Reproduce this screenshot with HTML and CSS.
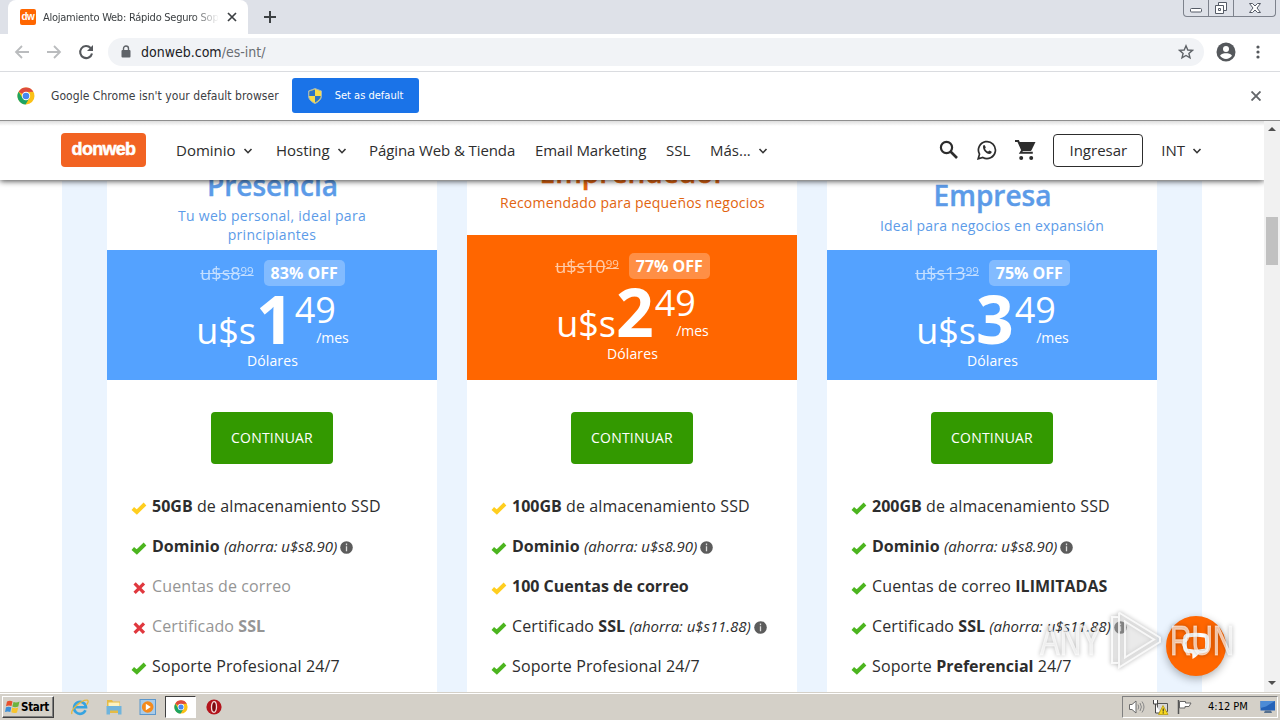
FILE: index.html
```html
<!DOCTYPE html>
<html lang="es">
<head>
  <meta charset="UTF-8" />
  <meta name="viewport" content="width=device-width, initial-scale=1.0" />
  <title>Alojamiento Web: Rápido Seguro Soporte</title>
  <link rel="stylesheet" href="styles.css">
</head>
<body>
  <!-- shared icons -->
  <svg class="defs" width="0" height="0">
    <symbol id="check" viewBox="0 0 16 14"><path d="M1.8 7.600 5.8 11 14 3" fill="none" stroke="currentColor" stroke-width="3.9"/></symbol>
    <symbol id="cross" viewBox="0 0 16 14"><path d="M3.600 2.400 13 11.800M13 2.400 3.600 11.800" fill="none" stroke="currentColor" stroke-width="3.2"/></symbol>
    <symbol id="info" viewBox="0 0 13 13"><circle cx="6.5" cy="6.5" r="6.3" fill="#5c5c5c"/><path d="M6.5 2.6v1.6M6.5 5.3v5" stroke="#ddd" stroke-width="1.3"/></symbol>
    <symbol id="chevron" viewBox="0 0 10 10"><path d="M1.5 3 5 6.7 8.5 3" fill="none" stroke="#333" stroke-width="1.6"/></symbol>
    <symbol id="chrome" viewBox="0 0 18 18">
      <circle cx="9" cy="9" r="8.5" fill="#fbc116"/>
      <path d="M9 9 1.6 4.7A8.5 8.5 0 0 1 16.4 4.8L9 5z" fill="#dd4b3e"/>
      <path d="M1.6 4.7A8.5 8.5 0 0 0 8.6 17.5L12.4 11 9 9 5.6 11z" fill="#1da462"/>
      <circle cx="9" cy="9" r="4.2" fill="#fff"/><circle cx="9" cy="9" r="3.3" fill="#4688f1"/>
    </symbol>
  </svg>

  <div class="tabstrip">
    <div class="tab">
      <span class="favicon">dw</span>
      <span class="tab-title">Alojamiento Web: Rápido Seguro Sop</span>
      <svg width="10" height="10" viewBox="0 0 10 10"><path d="M1 1l8 8M9 1 1 9" stroke="#3c4043" stroke-width="1.7"/></svg>
    </div>
    <svg class="new-tab" width="12" height="12" viewBox="0 0 12 12"><path d="M6 0v12M0 6h12" stroke="#3c4043" stroke-width="2"/></svg>
    <div class="win-buttons">
      <span><svg width="14" height="16" viewBox="0 0 14 16"><rect x="1.5" y="8.5" width="11" height="3.5" rx="1" fill="#fff" stroke="#555b66"/></svg></span>
      <span><svg width="14" height="16" viewBox="0 0 14 16"><path d="M4.500 2.500h8v8h-8z" fill="#fff" stroke="#555b66"/><path d="M1.500 5.500h8v8h-8z" fill="#fff" stroke="#555b66"/><path d="M4.500 8.500h2v2h-2z" fill="none" stroke="#555b66"/></svg></span>
      <span class="wide"><svg width="14" height="16" viewBox="0 0 14 16"><path d="M1.500 3.500h3L7 6l2.500-2.500h3L9 8l3.500 4.500h-3L7 10l-2.500 2.500h-3L5 8z" fill="#fff" stroke="#555b66"/></svg></span>
    </div>
  </div>

  <div class="toolbar">
    <svg width="16" height="16" viewBox="0 0 16 16"><path d="M15 8H2M8 2 2 8l6 6" fill="none" stroke="#babcbe" stroke-width="1.8"/></svg>
    <svg width="16" height="16" viewBox="0 0 16 16"><path d="M1 8h13M8 2l6 6-6 6" fill="none" stroke="#babcbe" stroke-width="1.8"/></svg>
    <svg width="16" height="16" viewBox="0 0 16 16"><path d="M12.600 4A6 6 0 1 0 14 9.500" fill="none" stroke="#55585c" stroke-width="2.1"/><path d="M15 1v6H9z" fill="#55585c"/></svg>
    <div class="omnibox">
      <svg width="10" height="13" viewBox="0 0 10 13"><rect x="0.500" y="5" width="9" height="7.500" rx="1" fill="#5f6368"/><path d="M2.500 5.500V3.500a2.500 2.500 0 0 1 5 0v2" fill="none" stroke="#5f6368" stroke-width="1.400"/></svg>
      <span class="url">donweb.com<i>/es-int/</i></span>
      <svg class="star" width="16" height="16" viewBox="0 0 16 16"><path d="M8 1.800l1.800 4.200 4.600.4-3.500 3 1.100 4.500L8 11.500l-4 2.400 1.100-4.500-3.500-3L6.200 6z" fill="none" stroke="#5f6368" stroke-width="1.400"/></svg>
    </div>
    <svg class="avatar" width="20" height="20" viewBox="0 0 20 20"><circle cx="10" cy="10" r="9.500" fill="#55585c"/><circle cx="10" cy="7" r="3" fill="#fff"/><path d="M4 13.800c1-2 4-2.600 6-2.600s5 .6 6 2.600a7.300 7.300 0 0 1-12 0z" fill="#fff"/></svg>
    <svg class="kebab" width="4" height="14" viewBox="0 0 4 14"><g fill="#55585c"><circle cx="2" cy="2" r="1.600"/><circle cx="2" cy="7" r="1.600"/><circle cx="2" cy="12" r="1.600"/></g></svg>
  </div>

  <div class="infobar">
    <svg width="18" height="18"><use href="#chrome"/></svg>
    <span class="infobar-text">Google Chrome isn't your default browser</span>
    <button class="set-default">
      <svg width="14" height="16" viewBox="0 0 14 16"><path d="M7 .5 13.500 3v4.500c0 4-3 6.500-6.500 8-3.500-1.500-6.500-4-6.500-8V3z" fill="#f7dc4c" stroke="#9fb5c0"/><path d="M7 1.500v6.500H1.200V3.500zM7 8h5.800c-.3 3-2.800 5-5.800 6.500z" fill="#2c74c8"/></svg>
      Set as default
    </button>
    <svg class="infobar-close" width="10" height="10" viewBox="0 0 10 10"><path d="M.5.5l9 9M9.500.5l-9 9" stroke="#63666a" stroke-width="1.900"/></svg>
  </div>

  <div class="viewport">
    <div class="page">
      <header class="navbar">
        <a class="logo">donweb</a>
        <nav>
          <a class="n1">Dominio <svg width="10" height="10"><use href="#chevron"/></svg></a>
          <a class="n2">Hosting <svg width="10" height="10"><use href="#chevron"/></svg></a>
          <a class="n3">Página Web &amp; Tienda</a>
          <a class="n4">Email Marketing</a>
          <a class="n5">SSL</a>
          <a class="n6">Más... <svg width="10" height="10"><use href="#chevron"/></svg></a>
        </nav>
        <div class="actions">
          <svg width="20" height="20" viewBox="0 0 20 20"><circle cx="7.500" cy="7.500" r="5.600" fill="none" stroke="#2d2d2d" stroke-width="2.200"/><path d="M11.500 11.500l6.500 6.500" stroke="#2d2d2d" stroke-width="2.700"/></svg>
          <svg width="20" height="20" viewBox="0 0 20 20"><path d="M1.200 18.800l1.300-4.600a8.500 8.500 0 1 1 3.300 3.300z" fill="none" stroke="#2d2d2d" stroke-width="1.700"/><path d="M6.200 5.600c.7-.8 1.500-.6 1.800.1l.7 1.500c.2.500-.7 1.200-.6 1.500.6 1.400 1.700 2.300 3 2.900.4.200 1-1.100 1.400-1l1.900.9c.6.400.1 1.600-.5 2.100-3.200 2.100-9-3.300-7.700-8z" fill="#2d2d2d"/></svg>
          <svg width="21" height="20" viewBox="0 0 21 20"><path d="M0 1h3.200l4 9.200-1.600 2.600h12.200" fill="none" stroke="#2d2d2d" stroke-width="2"/><path d="M3.800 2h16.700l-4 8.300-.8.700H7.300z" fill="#2d2d2d"/><circle cx="6.200" cy="18" r="2" fill="#2d2d2d"/><circle cx="16.200" cy="18" r="2" fill="#2d2d2d"/></svg>
          <button class="login">Ingresar</button>
          <a class="country">INT <svg width="10" height="10"><use href="#chevron"/></svg></a>
        </div>
      </header>

      <main class="plans">
        <section class="plan">
          <div class="plan-head">
            <h2>Presencia</h2>
            <p>Tu web personal, ideal para<br>principiantes</p>
          </div>
          <div class="plan-price">
            <div class="before"><s>u$s8<sup>99</sup></s><b>83% OFF</b></div>
            <div class="price"><span>u$s</span><strong>1</strong><div class="cents">49<small>/mes</small></div></div>
            <div class="currency">Dólares</div>
          </div>
          <a class="btn">CONTINUAR</a>
          <ul>
            <li><svg class="yellow"><use href="#check"/></svg><b>50GB</b> de almacenamiento SSD</li>
            <li><svg class="green"><use href="#check"/></svg><b>Dominio</b> <em>(ahorra: u$s8.90)</em> <svg class="info"><use href="#info"/></svg></li>
            <li class="off"><svg class="red"><use href="#cross"/></svg>Cuentas de correo</li>
            <li class="off"><svg class="red"><use href="#cross"/></svg>Certificado <b>SSL</b></li>
            <li><svg class="green"><use href="#check"/></svg>Soporte Profesional 24/7</li>
          </ul>
        </section>

        <section class="plan featured">
          <div class="plan-head">
            <h2>Emprendedor</h2>
            <p>Recomendado para pequeños negocios</p>
          </div>
          <div class="plan-price">
            <div class="before"><s>u$s10<sup>99</sup></s><b>77% OFF</b></div>
            <div class="price"><span>u$s</span><strong>2</strong><div class="cents">49<small>/mes</small></div></div>
            <div class="currency">Dólares</div>
          </div>
          <a class="btn">CONTINUAR</a>
          <ul>
            <li><svg class="yellow"><use href="#check"/></svg><b>100GB</b> de almacenamiento SSD</li>
            <li><svg class="green"><use href="#check"/></svg><b>Dominio</b> <em>(ahorra: u$s8.90)</em> <svg class="info"><use href="#info"/></svg></li>
            <li><svg class="yellow"><use href="#check"/></svg><b>100 Cuentas de correo</b></li>
            <li><svg class="green"><use href="#check"/></svg>Certificado <b>SSL</b> <em>(ahorra: u$s11.88)</em> <svg class="info"><use href="#info"/></svg></li>
            <li><svg class="green"><use href="#check"/></svg>Soporte Profesional 24/7</li>
          </ul>
        </section>

        <section class="plan single">
          <div class="plan-head">
            <h2>Empresa</h2>
            <p>Ideal para negocios en expansión</p>
          </div>
          <div class="plan-price">
            <div class="before"><s>u$s13<sup>99</sup></s><b>75% OFF</b></div>
            <div class="price"><span>u$s</span><strong>3</strong><div class="cents">49<small>/mes</small></div></div>
            <div class="currency">Dólares</div>
          </div>
          <a class="btn">CONTINUAR</a>
          <ul>
            <li><svg class="green"><use href="#check"/></svg><b>200GB</b> de almacenamiento SSD</li>
            <li><svg class="green"><use href="#check"/></svg><b>Dominio</b> <em>(ahorra: u$s8.90)</em> <svg class="info"><use href="#info"/></svg></li>
            <li><svg class="green"><use href="#check"/></svg>Cuentas de correo <b>ILIMITADAS</b></li>
            <li><svg class="green"><use href="#check"/></svg>Certificado <b>SSL</b> <em>(ahorra: u$s11.88)</em> <svg class="info"><use href="#info"/></svg></li>
            <li><svg class="green"><use href="#check"/></svg>Soporte <b>Preferencial</b> 24/7</li>
          </ul>
        </section>
      </main>
    </div>

    <div class="scrollbar">
      <svg width="8" height="4" viewBox="0 0 8 4"><path d="M0 4 4 0l4 4z" fill="#505050"/></svg>
      <div class="thumb"></div>
      <svg class="down" width="8" height="4" viewBox="0 0 8 4"><path d="M0 0h8L4 4z" fill="#505050"/></svg>
    </div>

    <div class="chat">
      <svg width="28" height="28" viewBox="0 0 28 28"><path d="M5.500 3.500Q14 2 22.500 3.500q2 .4 2.300 2.500.7 5 0 10.500-.3 2-2.300 2.300Q14 20.500 5.500 18.800q-2-.3-2.300-2.300-.7-5.500 0-10.500.3-2.100 2.300-2.500z" fill="none" stroke="#fff" stroke-width="4"/><path d="M10 19l8.500-.5q-1.500 5-8 8.500z" fill="#fff"/></svg>
    </div>

    <div class="watermark">
      <span>ANY</span>
      <svg width="56" height="64" viewBox="0 0 56 64"><path d="M10 4.500 51 29.500 51 34 10 59.500V49M10 20V4.500M16 13.500l29 18-29 18zM3 9v46h7V9z" fill="rgba(255,255,255,.3)" stroke="rgba(255,255,255,.8)" stroke-width="2"/></svg>
      <span>RUN</span>
    </div>
  </div>

  <footer class="taskbar">
    <button class="start">
      <svg width="16" height="16" viewBox="0 0 16 16"><path d="M2 2.500q3-1.500 5.500 0L6.500 7q-3-1-5.500.2z" fill="#e8502c"/><path d="M8.500 3q3 1 6-.5l-1.200 5Q10 9 7.300 7.500z" fill="#6db33f"/><path d="M1 8.300q2.500-1.200 5.300-.1l-1 4.800Q2.800 12 0 13z" fill="#3c8fd8"/><path d="M7.200 8.600q3 1.200 6 0l-1.200 4.800q-3 1.200-5.700-.1z" fill="#f8c42c"/></svg>
      Start
    </button>
    <div class="apps">
      <span><svg width="18" height="18" viewBox="0 0 18 18"><path d="M14.500 12.300A6 6 0 1 1 15 9.200H4" fill="none" stroke="#36a3e0" stroke-width="2.600"/><path d="M1 16C-1 12 10 2 16 2.200c2 .3 1 3-.5 4.500" fill="none" stroke="#e8b83a" stroke-width="1.300"/></svg></span>
      <span><svg width="18" height="18" viewBox="0 0 18 18"><path d="M2 2h5l1 1.500h7V15H2z" fill="#e5bb45"/><path d="M3.500 4.500h11v5h-11z" fill="#fbf2c0"/><path d="M1.500 8h15v8.500h-3.500v-4H5v4H1.500z" fill="#6fb4dc"/></svg></span>
      <span><svg width="18" height="18" viewBox="0 0 18 18"><rect x="1" y="1.500" width="15.500" height="15" fill="#a9cbe8" stroke="#5b97cc"/><circle cx="8.700" cy="9" r="5.800" fill="#f48a1c"/><path d="M6.800 5.800v6.500l5-3.200z" fill="#fff"/></svg></span>
      <span class="active"><svg width="14" height="14"><use href="#chrome"/></svg></span>
      <span><svg width="16" height="16" viewBox="0 0 16 16"><circle cx="8" cy="8" r="7.600" fill="#b3141c"/><ellipse cx="8" cy="8" rx="2.500" ry="5.300" fill="#7d090f" stroke="#f3dcdc" stroke-width="1.300"/></svg></span>
    </div>
    <div class="tray">
      <svg width="17" height="16" viewBox="0 0 17 16"><path d="M1.500 5.500h2.500L8 2v12L4 10.500H1.500z" fill="#fff" stroke="#6b6b6b"/><path d="M10 5.500q1.500 2.500 0 5M12 4q2.800 4 0 8M14 2.500q4 5.500 0 11" fill="none" stroke="#888"/></svg>
      <svg width="17" height="16" viewBox="0 0 17 16"><path d="M5.500 4.500h10v8h-10z" fill="#d8d8d8" stroke="#555"/><path d="M1.500 1v4h4V1M3.500 5v9h5" fill="#fff" stroke="#444"/><path d="M11 6.500l5 9H6.500z" fill="#f8d820" stroke="#b39500" stroke-width=".7"/><path d="M11.200 9.500v3M11.200 13.300v1.200" stroke="#222"/></svg>
      <svg width="17" height="16" viewBox="0 0 17 16"><path d="M2.500 1v14" stroke="#555" stroke-width="1.500"/><path d="M3.500 2.500h6v1.500h5.500l-2 3.500h-4v1.500H3.500z" fill="#fff" stroke="#666"/></svg>
      <span class="clock">4:12 PM</span>
      <svg width="16" height="14" viewBox="0 0 16 14"><path d="M.5 1h14.500v9.500H.5z" fill="#2462b8"/><path d="M.5 1h14.500L6 6.500.5 8z" fill="#4c8bd6"/><path d="M5 10.500h6l1 2.500H4z" fill="#56708e"/></svg>
    </div>
  </footer>
</body>
</html>
```
FILE: styles.css
```css
* {
  margin: 0;
  padding: 0;
  box-sizing: border-box;
}
body {
  width: 1280px;
  height: 720px;
  display: flex;
  flex-direction: column;
  overflow: hidden;
  background: #fff;
  font-family: "Open Sans", sans-serif;
  color: #2d2d2d;
}
svg {
  flex: none;
}
.defs {
  position: absolute;
}
button {
  border: none;
  font-family: inherit;
}

/* browser window */
.tabstrip,
.toolbar,
.infobar {
  font-family: "DejaVu Sans Condensed", "DejaVu Sans", sans-serif;
  font-stretch: condensed;
}
.tabstrip {
  flex: none;
  height: 34px;
  display: flex;
  align-items: center;
  background: #dee1e8;
}
.tab {
  width: 240px;
  height: 34px;
  margin-left: 8px;
  padding: 0 11px 0 12px;
  display: flex;
  align-items: center;
  background: #fff;
  border-radius: 8px 8px 0 0;
}
.favicon {
  width: 16px;
  height: 16px;
  border-radius: 2px;
  background: #f60;
  color: #fff;
  font: bold 10px/15px "Liberation Sans", sans-serif;
  letter-spacing: -0.5px;
  text-align: center;
}
.tab-title {
  width: 176px;
  margin: 0 9px 0 7px;
  overflow: hidden;
  white-space: nowrap;
  font-size: 11px;
  letter-spacing: -0.25px;
  color: #3c4043;
  -webkit-mask-image: linear-gradient(90deg, #000 150px, transparent 176px);
  mask-image: linear-gradient(90deg, #000 150px, transparent 176px);
}
.new-tab {
  margin-left: 16px;
}
.win-buttons {
  height: 17px;
  margin: 0 4px auto auto;
  display: flex;
  border: 1px solid #7d828c;
  border-top: none;
  border-radius: 0 0 4px 4px;
}
.win-buttons span {
  width: 25px;
  display: flex;
  justify-content: center;
  border-right: 1px solid #7d828c;
}
.win-buttons .wide {
  width: 41px;
  border-right: none;
}
.toolbar {
  flex: none;
  height: 38px;
  padding: 0 19px 2px 14px;
  display: flex;
  align-items: center;
  gap: 16px;
  border-bottom: 1px solid #dadce0;
}
.omnibox {
  width: 1096px;
  height: 28px;
  margin-left: -2px;
  padding: 0 10px 0 13px;
  display: flex;
  align-items: center;
  border-radius: 14px;
  background: #f1f3f6;
}
.url {
  margin-left: 10px;
  font-size: 14px;
  color: #202124;
}
.url i {
  font-style: normal;
  color: #696d72;
}
.star {
  margin-left: auto;
}
.avatar {
  margin-left: -4px;
}
.kebab {
  margin-left: 4px;
}
.infobar {
  flex: none;
  height: 48px;
  padding: 0 19px 1px 17px;
  display: flex;
  align-items: center;
}
.infobar-text {
  width: 229px;
  margin: 0 12px 0 16px;
  font-size: 12px;
  letter-spacing: 0.05px;
  white-space: nowrap;
  color: #3c4043;
}
.set-default {
  width: 127px;
  height: 35px;
  display: flex;
  align-items: center;
  justify-content: center;
  gap: 13px;
  border-radius: 3px;
  background: #1a73e8;
  color: #fff;
  font-size: 11px;
}
.infobar-close {
  margin-left: auto;
}

/* web page */
.viewport {
  position: relative;
  flex: 1;
  min-height: 0;
  display: flex;
  border-top: 1px solid #8f8f8f;
}
.page {
  width: 1264px;
  display: flex;
  flex-direction: column;
  overflow: hidden;
}
.navbar {
  position: relative;
  flex: none;
  height: 59px;
  margin-bottom: 1px;
  padding: 0 62px 1px 61px;
  display: flex;
  align-items: center;
  background: linear-gradient(#ddd, #fff 5px);
  box-shadow: 0 1px 6px rgba(0, 0, 0, 0.75);
  font-size: 15px;
}
.logo {
  width: 85px;
  height: 34px;
  margin-right: 30px;
  border-radius: 4px;
  background: #f26322;
  color: #fff;
  font: bold 18px/33px "Liberation Sans", sans-serif;
  letter-spacing: -0.7px;
  text-align: center;
  -webkit-text-stroke: 0.5px #fff;
}
nav,
.actions {
  display: flex;
  align-items: center;
}
nav a {
  white-space: nowrap;
}
nav svg,
.country svg {
  margin-left: 3px;
}
.n1 { width: 100px; }
.n2 { width: 93px; }
.n3 { width: 166px; letter-spacing: -0.1px; }
.n4 { width: 131px; letter-spacing: -0.1px; }
.n5 { width: 44px; }
.actions {
  margin-left: auto;
  gap: 18px;
}
.login {
  width: 90px;
  height: 33px;
  margin-left: -1px;
  padding-bottom: 1px;
  border: 1px solid #2d2d2d;
  border-radius: 4px;
  background: #fff;
  color: #2d2d2d;
  font-size: 15px;
}
.plans {
  flex: 1;
  width: 1140px;
  margin-left: 62px;
  padding: 0 45px;
  display: flex;
  gap: 30px;
  background: #ebf4fe;
}
.plan {
  width: 330px;
  background: #fff;
}
.plan-head {
  height: 69px;
  padding-bottom: 6px;
  display: flex;
  flex-direction: column;
  justify-content: flex-end;
  text-align: center;
  color: #5c9be8;
}
.plan-head h2 {
  margin-bottom: 2px;
  padding-left: 1px;
  font-size: 28px;
  line-height: 38px;
  font-weight: 600;
  -webkit-text-stroke: 0.4px;
}
.plan-head p {
  font-size: 14px;
  line-height: 19px;
  letter-spacing: 0.3px;
}
.plan-price {
  height: 130px;
  padding-top: 10px;
  background: #54a2ff;
  color: #fff;
  text-align: center;
}
.before {
  height: 26px;
  display: flex;
  align-items: center;
  justify-content: center;
  gap: 10px;
  padding-left: 1px;
}
.before s {
  font-size: 18px;
  line-height: 26px;
  opacity: 0.65;
}
.before sup {
  font-size: 11.5px;
  line-height: 0;
  vertical-align: 5px;
}
.before b {
  width: 81px;
  border-radius: 5px;
  background: rgba(255, 255, 255, 0.27);
  font-size: 16px;
  line-height: 26px;
}
.price {
  height: 65px;
  padding-left: 1px;
  display: flex;
  justify-content: center;
  font-size: 36px;
  line-height: 36px;
}
.price span {
  margin-top: 27px;
}
.price strong {
  margin-top: -1px;
  font-size: 66px;
  line-height: 66px;
}
.cents {
  width: 55px;
  margin-top: 6px;
  padding-left: 1px;
  text-align: left;
}
.cents small {
  display: block;
  font-size: 14px;
  line-height: 20px;
  text-align: right;
}
.currency {
  padding-left: 1px;
  font-size: 14px;
  line-height: 20px;
  letter-spacing: 0.1px;
}
.btn {
  width: 122px;
  height: 52px;
  margin: 32px auto 22px;
  display: block;
  border-radius: 4px;
  background: #339900;
  color: #fff;
  font-size: 14px;
  line-height: 52px;
  letter-spacing: 0.2px;
  text-align: center;
}
.plan ul {
  padding-left: 24px;
  list-style: none;
}
.plan li {
  height: 40px;
  font-size: 16px;
  line-height: 40px;
  letter-spacing: 0.12px;
  white-space: nowrap;
}
.plan li svg {
  width: 16px;
  height: 14px;
  margin-right: 5px;
  vertical-align: -3px;
}
.plan li .info {
  width: 13px;
  height: 13px;
  margin: 0 0 0 -1px;
  vertical-align: -2px;
}
.plan em {
  font-size: 15px;
  letter-spacing: -0.05px;
}
.plan li b {
  letter-spacing: 0;
}
.yellow { color: #ffce1f; }
.green { color: #4cb51f; }
.red { color: #e0383e; }
.off { color: #959595; }

.featured .plan-head {
  height: 54px;
  padding-bottom: 23px;
  color: #e2640f;
}
.featured .plan-head p {
  padding-left: 1px;
  letter-spacing: 0.2px;
}
.featured .plan-price {
  height: 145px;
  padding-top: 18px;
  background: #f60;
}
.single .plan-head {
  padding-bottom: 15px;
}
.single .plan-head p {
  letter-spacing: 0.2px;
}

.scrollbar {
  width: 16px;
  padding: 6px 0 7px;
  display: flex;
  flex-direction: column;
  align-items: center;
  background: #f1f1f1;
}
.thumb {
  width: 12px;
  height: 48px;
  margin-top: 86px;
  background: #c1c1c1;
}
.down {
  margin-top: auto;
}

/* floating over the page */
.chat {
  position: absolute;
  right: 54px;
  bottom: 16px;
  width: 60px;
  height: 60px;
  display: flex;
  align-items: center;
  justify-content: center;
  border-radius: 50%;
  background: #ff6600;
  box-shadow: 0 3px 8px rgba(0, 0, 0, 0.3);
}
.watermark {
  position: absolute;
  right: 46px;
  bottom: 20px;
  display: flex;
  align-items: center;
  gap: 5px;
  filter: drop-shadow(0 0 2px rgba(0, 0, 0, 0.4));
}
.watermark span {
  width: 64px;
  color: rgba(255, 255, 255, 0.65);
  font: 43px/60px "Liberation Sans Narrow", "Liberation Sans", sans-serif;
  transform: scaleX(0.69);
  transform-origin: left;
  -webkit-text-stroke: 1px rgba(255, 255, 255, 0.5);
}

/* taskbar */
.taskbar {
  flex: none;
  height: 28px;
  padding: 2px 2px 2px 2px;
  display: flex;
  align-items: center;
  border-top: 1px solid #d4d0c8;
  background: #d4d0c8;
  box-shadow: inset 0 1px #fff;
  font-family: "DejaVu Sans Condensed", sans-serif;
}
.start {
  width: 52px;
  height: 22px;
  display: flex;
  align-items: center;
  padding-left: 2px;
  border: 1px solid;
  border-color: #fff #404040 #404040 #fff;
  box-shadow: inset -1px -1px #808080;
  background: #d4d0c8;
  font-size: 11.5px;
  font-weight: bold;
  letter-spacing: -0.3px;
}
.apps {
  margin-left: 9px;
  display: flex;
}
.apps span {
  width: 34px;
  height: 22px;
  display: flex;
  align-items: center;
  justify-content: center;
}
.apps .active {
  width: 31px;
  margin: 0 1px 0 0;
  border: 1px solid;
  border-color: #404040 #fff #fff #404040;
  background: #fff;
}
.tray {
  width: 156px;
  height: 22px;
  margin-left: auto;
  padding: 0 1px 0 5px;
  display: flex;
  align-items: center;
  gap: 7px;
  border: 1px solid;
  border-color: #808080 #fff #fff #808080;
}
.clock {
  margin: 0 auto 0 8px;
  font-size: 11px;
  color: #000;
  white-space: nowrap;
}
```
